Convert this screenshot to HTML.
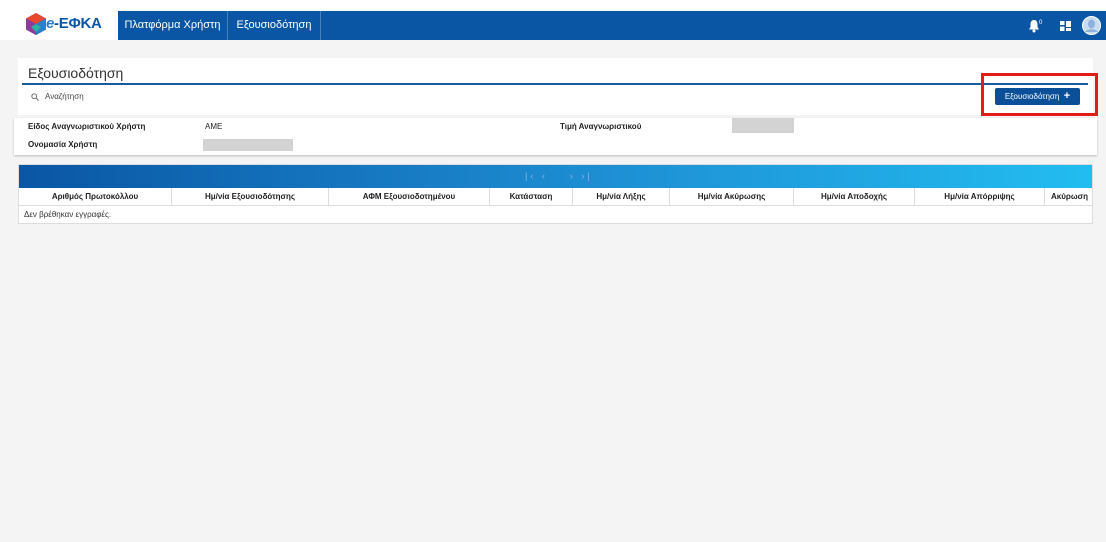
<!DOCTYPE html>
<html><head><meta charset="utf-8"><style>
*{box-sizing:border-box;margin:0;padding:0}
body{width:1106px;height:542px;background:#f4f4f4;font-family:"Liberation Sans",sans-serif;position:relative;overflow:hidden;color:#222}
.top{position:absolute;left:0;top:0;width:1106px;height:40px;background:#fff}
.nav{position:absolute;left:118px;top:11px;right:0;height:29px;background:#0a56a4;color:#fff;font-size:11px}
.nav span{position:absolute;top:0;height:29px;line-height:29px;text-align:center;border-right:1px solid #4a80bb}
.abs{position:absolute}
.panel{position:absolute;left:18px;top:58px;width:1075px;height:57px;background:#fff}
.info{position:absolute;left:14px;top:118px;width:1083px;height:37px;background:#fff;box-shadow:0 1px 2px #bbb;font-size:8px;font-weight:bold}
.tbl{position:absolute;left:18px;top:164px;width:1075px;height:60px;background:#fff;border:1px solid #ddd}
.bar{height:23px;background:linear-gradient(90deg,#0a56a4,#1e8fd4 55%,#22bdf0)}
.hd{position:relative;height:18px;border-bottom:1px solid #ddd;font-size:8px;font-weight:bold}
.hd div{position:absolute;top:0;height:18px;line-height:18px;text-align:center;border-right:1px solid #ddd}
</style></head><body>
<div class="top">
 <svg class="abs" style="left:26px;top:13px" width="20" height="22" viewBox="0 0 20 22"><polygon points="10,0 20,5.5 20,16.5 10,22 0,16.5 0,5.5" fill="#7b3aa0"/><polygon points="10,0 20,5.5 10,11 0,5.5" fill="#e8492e"/><polygon points="10,11 20,5.5 20,16.5 10,22" fill="#2a7fc8"/><polygon points="0,5.5 10,11 10,22 0,16.5" fill="#8c3a9c"/><polygon points="5,14 10,11 15,14 10,19" fill="#2bb3a0"/></svg>
 <div class="abs" style="left:46px;top:15px;font-size:15px;font-weight:bold;color:#0a56a4;letter-spacing:-0.3px"><i style="color:#2a7fc8">e</i>-ΕΦΚΑ</div>
</div>
<div class="nav">
 <span style="left:0;width:110px">Πλατφόρμα Χρήστη</span>
 <span style="left:110px;width:93px">Εξουσιοδότηση</span>
 <svg class="abs" style="left:910px;top:8px" width="16" height="14" viewBox="0 0 16 14"><path d="M6 1C3.5 1 2.5 3 2.5 5.5V8L1 10.5H11L9.5 8V5.5C9.5 3 8.5 1 6 1Z" fill="#fff"/><circle cx="6" cy="12" r="1.5" fill="#fff"/><text x="11" y="5" font-size="6" fill="#fff" font-family="Liberation Sans">0</text></svg>
 <svg class="abs" style="left:942px;top:10px" width="11" height="10" viewBox="0 0 11 10"><rect x="0" y="0" width="4.5" height="4" fill="#fff"/><rect x="6" y="0" width="5" height="6" fill="#fff"/><rect x="0" y="5.5" width="4.5" height="4.5" fill="#fff"/><rect x="6" y="7" width="5" height="3" fill="#fff"/></svg>
 <svg class="abs" style="left:964px;top:5px" width="19" height="19" viewBox="0 0 19 19"><circle cx="9.5" cy="9.5" r="9" fill="#c9dcf0" stroke="#fff"/><ellipse cx="9.5" cy="8" rx="3.5" ry="4.5" fill="#8fb2dc"/><path d="M3 16C4.5 12.5 14.5 12.5 16 16" fill="#8fb2dc"/></svg>
</div>
<div class="panel">
 <div class="abs" style="left:10px;top:7px;font-size:14px;color:#333">Εξουσιοδότηση</div>
 <div class="abs" style="left:4px;top:25px;width:1066px;height:2px;background:#1a5a9a"></div>
 <svg class="abs" style="left:13px;top:35px" width="8" height="8" viewBox="0 0 8 8"><circle cx="3.2" cy="3.2" r="2.4" fill="none" stroke="#666" stroke-width="0.9"/><path d="M5 5L7.5 7.5" stroke="#666" stroke-width="0.9"/></svg>
 <div class="abs" style="left:27px;top:34px;font-size:8px;color:#444">Αναζήτηση</div>
 <div class="abs" style="left:977px;top:30px;width:85px;height:17px;background:#0a4f98;color:#fff;font-size:8px;line-height:17px;text-align:center;border-radius:2px">Εξουσιοδότηση &nbsp;<b style="font-size:11px">+</b></div>
</div>
<div class="abs" style="left:981px;top:73px;width:117px;height:43px;border:3px solid #e31b1b"></div>
<div class="info">
 <div class="abs" style="left:14px;top:4px">Είδος Αναγνωριστικού Χρήστη</div>
 <div class="abs" style="left:191px;top:4px;font-weight:normal">AME</div>
 <div class="abs" style="left:14px;top:22px">Ονομασία Χρήστη</div>
 <div class="abs" style="left:189px;top:21px;width:90px;height:12px;background:#d3d3d3"></div>
 <div class="abs" style="left:546px;top:4px">Τιμή Αναγνωριστικού</div>
 <div class="abs" style="left:718px;top:0;width:62px;height:15px;background:#d3d3d3"></div>
</div>
<div class="tbl">
 <div class="bar"><span class="abs" style="left:506px;top:6px;font-size:9px;color:#8fb8e0;letter-spacing:3px">|‹ ‹ &nbsp;&nbsp; › ›|</span></div>
 <div class="hd">
  <div style="left:0;width:153px">Αριθμός Πρωτοκόλλου</div>
  <div style="left:153px;width:157px">Ημ/νία Εξουσιοδότησης</div>
  <div style="left:310px;width:161px">ΑΦΜ Εξουσιοδοτημένου</div>
  <div style="left:471px;width:83px">Κατάσταση</div>
  <div style="left:554px;width:97px">Ημ/νία Λήξης</div>
  <div style="left:651px;width:124px">Ημ/νία Ακύρωσης</div>
  <div style="left:775px;width:121px">Ημ/νία Αποδοχής</div>
  <div style="left:896px;width:130px">Ημ/νία Απόρριψης</div>
  <div style="left:1026px;width:49px;border:0">Ακύρωση</div>
 </div>
 <div style="font-size:8px;padding:4px 5px;color:#333">Δεν βρέθηκαν εγγραφές.</div>
</div>
</body></html>
